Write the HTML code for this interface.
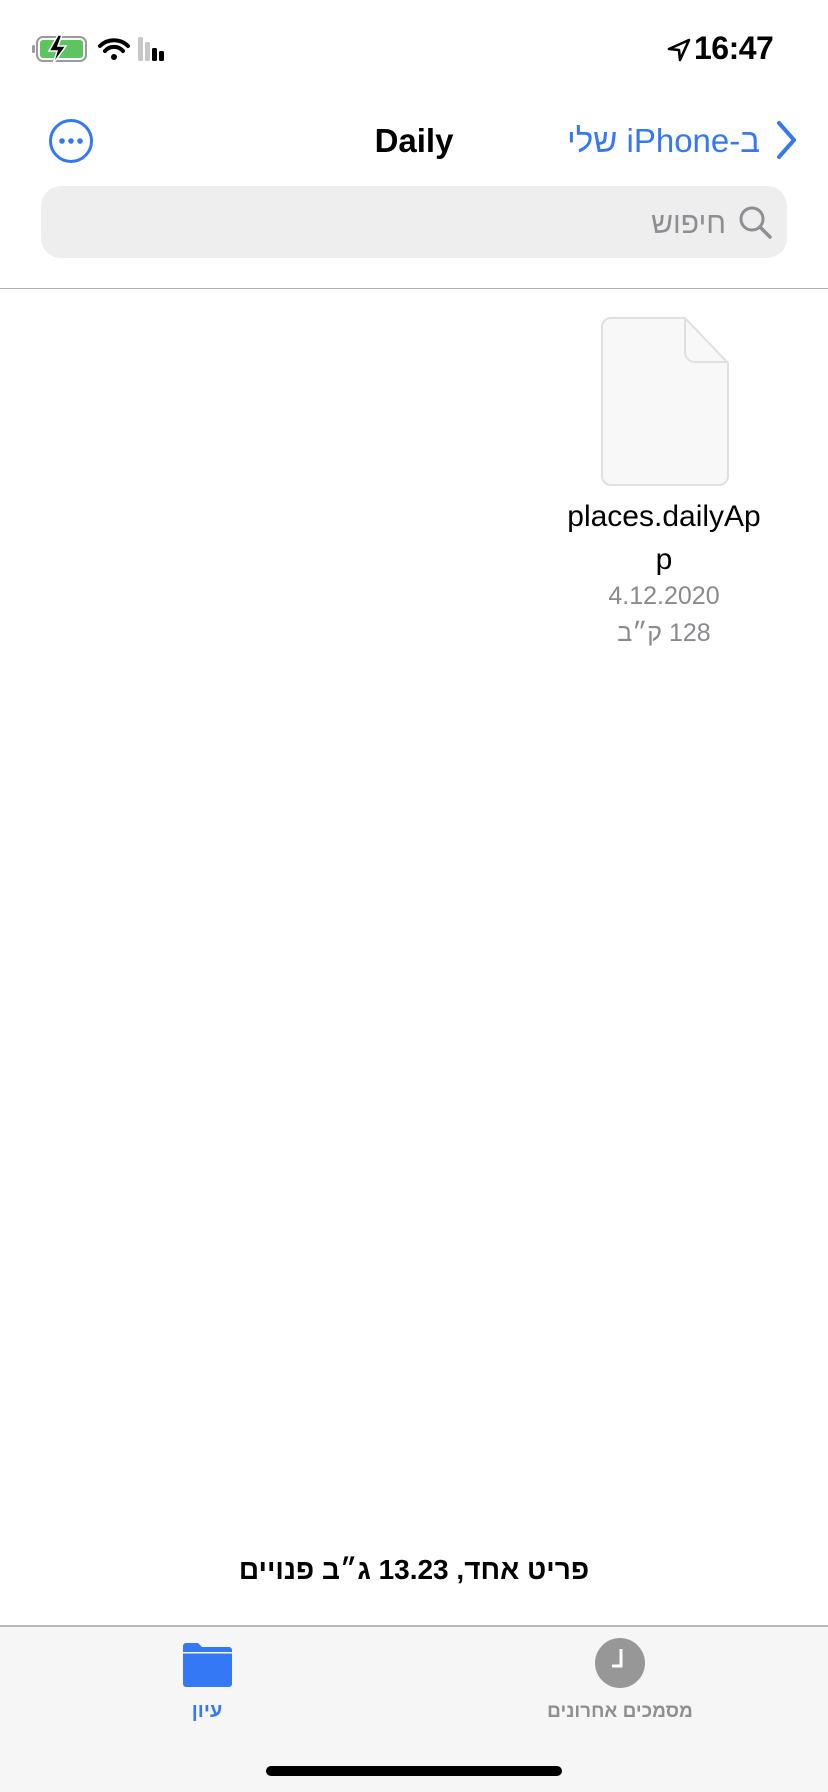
<!DOCTYPE html>
<html><head><meta charset="utf-8"><style>
*{margin:0;padding:0;box-sizing:border-box}
body{width:828px;height:1792px;background:#fff;font-family:"Liberation Sans","Noto Sans CJK SC",sans-serif;position:relative;overflow:hidden}
.a{position:absolute}
</style></head><body>
<!-- status bar -->
<svg class="a" style="left:30px;top:34px" width="150" height="30" viewBox="0 0 150 30">
<rect x="7" y="3" width="49" height="24" rx="6" fill="none" stroke="#9a9a9a" stroke-width="2"/>
<rect x="2" y="11" width="3" height="8" rx="1.5" fill="#9a9a9a"/>
<rect x="10" y="6" width="43" height="18" rx="3" fill="#5ec45f"/>
<path d="M28 1 L19 17 L27 17 L23 30 L36 12 L28 12 L32 1 Z" fill="#000" stroke="#fff" stroke-width="1.5"/>
<path d="M70 12 a20 20 0 0 1 28 0" fill="none" stroke="#000" stroke-width="4" stroke-linecap="round"/>
<path d="M75 17 a12 12 0 0 1 18 0" fill="none" stroke="#000" stroke-width="4" stroke-linecap="round"/>
<circle cx="84" cy="23" r="3" fill="#000"/>
<rect x="108" y="3" width="5" height="24" rx="1.5" fill="#c8c8c8"/>
<rect x="115" y="8" width="5" height="19" rx="1.5" fill="#c8c8c8"/>
<rect x="122" y="14" width="5" height="13" rx="1.5" fill="#000"/>
<rect x="129" y="17" width="5" height="10" rx="1.5" fill="#000"/>
</svg>
<svg class="a" style="left:667px;top:38px" width="24" height="24" viewBox="0 0 24 24"><path d="M22 2 L2 11 L12 12 L13 22 Z" fill="none" stroke="#000" stroke-width="2.6" stroke-linejoin="round"/></svg>
<div class="a" style="left:694px;top:30px;font-size:32px;font-weight:bold;letter-spacing:-0.5px">16:47</div>
<!-- nav -->
<svg class="a" style="left:48px;top:118px" width="46" height="46" viewBox="0 0 46 46"><circle cx="23" cy="23" r="20.5" fill="none" stroke="#3478f6" stroke-width="3"/><circle cx="14" cy="23" r="2.8" fill="#3478f6"/><circle cx="23" cy="23" r="2.8" fill="#3478f6"/><circle cx="32" cy="23" r="2.8" fill="#3478f6"/></svg>
<div class="a" style="left:314px;top:122px;width:200px;text-align:center;font-size:33px;font-weight:bold">Daily</div>
<div class="a" dir="rtl" style="left:540px;top:122px;width:220px;text-align:right;font-size:33px;color:#3478f6">ב-iPhone שלי</div>
<svg class="a" style="left:774px;top:120px" width="26" height="40" viewBox="0 0 26 40"><path d="M5 3 L20 20 L5 37" fill="none" stroke="#3478f6" stroke-width="4" stroke-linecap="round" stroke-linejoin="round"/></svg>
<!-- search -->
<div class="a" style="left:41px;top:186px;width:746px;height:72px;border-radius:20px;background:#eeeeef"></div>
<svg class="a" style="left:738px;top:205px" width="36" height="36" viewBox="0 0 36 36"><circle cx="14" cy="14" r="11" fill="none" stroke="#8e8e93" stroke-width="3"/><path d="M22 22 L32 32" stroke="#8e8e93" stroke-width="3.5" stroke-linecap="round"/></svg>
<div class="a" dir="rtl" style="left:600px;top:207px;width:126px;text-align:right;font-size:30px;color:#8e8e93">חיפוש</div>
<div class="a" style="left:0;top:288px;width:828px;height:1px;background:#b2b2b2"></div>
<!-- file -->
<svg class="a" style="left:599px;top:316px" width="132" height="172" viewBox="0 0 132 172">
<path d="M10 2 H86 L129 47 V160 a9 9 0 0 1 -9 9 H12 a9 9 0 0 1 -9 -9 V11 a9 9 0 0 1 9 -9 Z" fill="#f8f8f8" stroke="#e0e0e0" stroke-width="2"/>
<path d="M86 2 V36 a10 10 0 0 0 10 10 H129" fill="none" stroke="#e0e0e0" stroke-width="2"/>
</svg>
<div class="a" style="left:544px;top:495px;width:240px;text-align:center;font-size:30px;line-height:43px;color:#000">places.dailyAp<br>p</div>
<div class="a" style="left:544px;top:582px;width:240px;text-align:center;font-size:25px;color:#8a8a8e">4.12.2020</div>
<div class="a" dir="rtl" style="left:544px;top:619px;width:240px;text-align:center;font-size:25px;color:#8a8a8e">128 ק״ב</div>
<!-- bottom -->
<div class="a" dir="rtl" style="left:150px;top:1554px;width:528px;text-align:center;font-size:28px;font-weight:bold">פריט אחד, 13.23 ג״ב פנויים</div>
<div class="a" style="left:0;top:1625px;width:828px;height:167px;background:#f6f6f6;border-top:2px solid #b8b8b8"></div>
<svg class="a" style="left:181px;top:1642px" width="52" height="46" viewBox="0 0 52 46"><path d="M2 4 a3 3 0 0 1 3 -3 H17 L21 5 H48 a3 3 0 0 1 3 3 V42 a3 3 0 0 1 -3 3 H5 a3 3 0 0 1 -3 -3 Z" fill="#3478f6"/><rect x="2" y="10" width="49" height="1.5" fill="#f6f6f6"/></svg>
<div class="a" dir="rtl" style="left:157px;top:1700px;width:100px;text-align:center;font-size:20px;font-weight:bold;color:#3478f6">עיון</div>
<svg class="a" style="left:595px;top:1638px" width="50" height="50" viewBox="0 0 50 50"><circle cx="25" cy="25" r="25" fill="#979797"/><path d="M26 11 V28 H17" fill="none" stroke="#fff" stroke-width="3"/></svg>
<div class="a" dir="rtl" style="left:520px;top:1701px;width:200px;text-align:center;font-size:19px;font-weight:bold;color:#8e8e93">מסמכים אחרונים</div>
<div class="a" style="left:266px;top:1766px;width:296px;height:10px;border-radius:5px;background:#000"></div>
</body></html>
